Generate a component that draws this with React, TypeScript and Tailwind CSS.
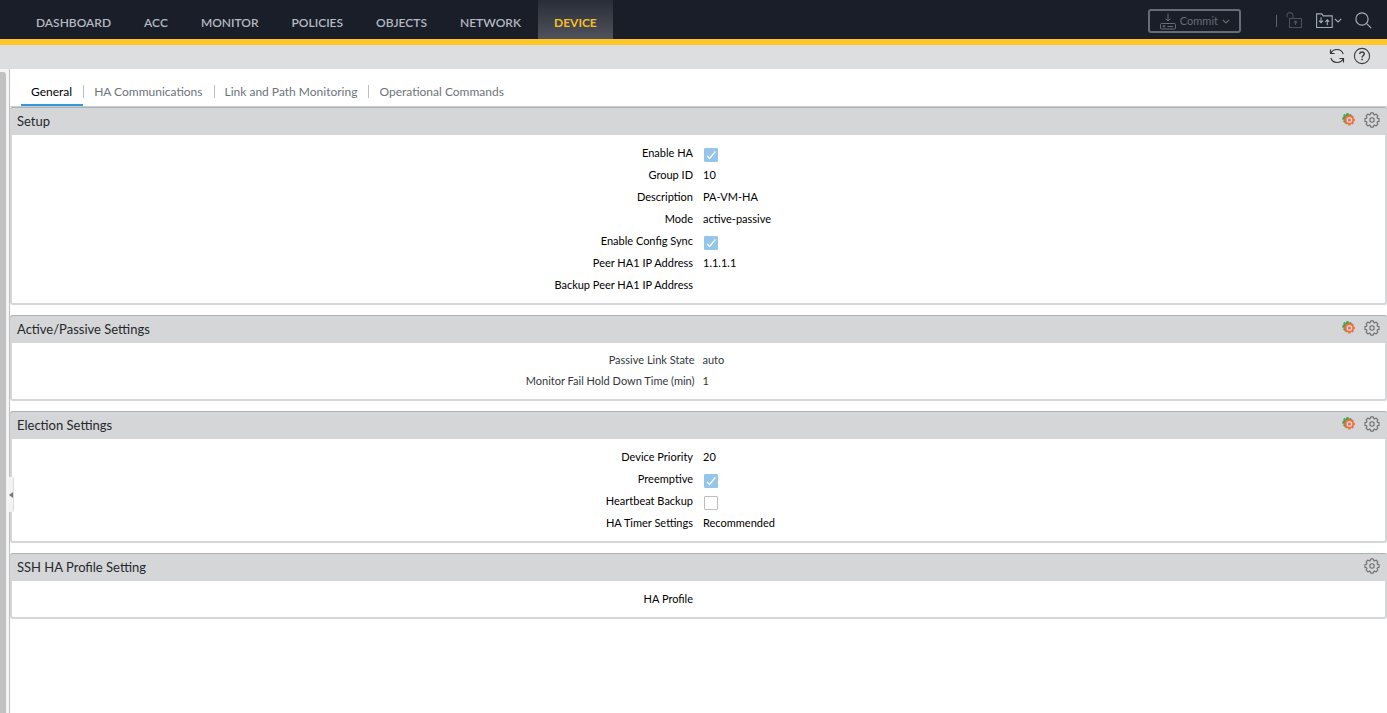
import React, { useId, useState } from 'react';

const NAV = ['DASHBOARD', 'ACC', 'MONITOR', 'POLICIES', 'OBJECTS', 'NETWORK', 'DEVICE'];
const TABS = ['General', 'HA Communications', 'Link and Path Monitoring', 'Operational Commands'];

type Field = { label: string; value: string | boolean };

const SETUP: Field[] = [
  { label: 'Enable HA', value: true },
  { label: 'Group ID', value: '10' },
  { label: 'Description', value: 'PA-VM-HA' },
  { label: 'Mode', value: 'active-passive' },
  { label: 'Enable Config Sync', value: true },
  { label: 'Peer HA1 IP Address', value: '1.1.1.1' },
  { label: 'Backup Peer HA1 IP Address', value: '' },
];
const ACTIVE_PASSIVE: Field[] = [
  { label: 'Passive Link State', value: 'auto' },
  { label: 'Monitor Fail Hold Down Time (min)', value: '1' },
];
const ELECTION: Field[] = [
  { label: 'Device Priority', value: '20' },
  { label: 'Preemptive', value: true },
  { label: 'Heartbeat Backup', value: false },
  { label: 'HA Timer Settings', value: 'Recommended' },
];
const SSH: Field[] = [{ label: 'HA Profile', value: '' }];

function gearPath(cx: number, cy: number, outer: number, inner: number) {
  const points: string[] = [];
  for (let i = 0; i < 8; i++) {
    const a = (i * Math.PI) / 4 - Math.PI / 2;
    [
      [-0.34, inner],
      [-0.17, outer],
      [0.17, outer],
      [0.34, inner],
    ].forEach(([d, r]) => {
      points.push(`${(cx + r * Math.cos(a + d)).toFixed(2)} ${(cy + r * Math.sin(a + d)).toFixed(2)}`);
    });
  }
  return `M${points.join('L')}Z`;
}

function GearIcon() {
  return (
    <svg width="16" height="16" viewBox="0 0 16 16" fill="none" stroke="#6b6e71" strokeWidth="1.1" strokeLinejoin="round">
      <path d={gearPath(8, 8, 7.2, 5.6)} />
      <circle cx="8" cy="8" r="2.2" />
    </svg>
  );
}

function TemplateIcon() {
  return (
    <svg width="13" height="13" viewBox="0 0 13 13">
      <path d={gearPath(5.5, 5.4, 5.4, 4.1)} fill="#3fa64b" />
      <path d={gearPath(7.4, 7, 5.6, 4.2)} fill="#f2683c" />
      <circle cx="7.4" cy="7" r="3" fill="#e2d3cd" />
      <circle cx="7.4" cy="7" r="1.5" fill="#f2683c" />
    </svg>
  );
}

function CommitIcon() {
  return (
    <svg width="16" height="17" viewBox="0 0 16 17" fill="none" stroke="currentColor">
      <path d="M8 0.5V8M5.5 5.6L8 8.1L10.5 5.6" />
      <path d="M1.5 10.5H14.5a1 1 0 0 1 1 1v3.5a1 1 0 0 1-1 1H1.5a1 1 0 0 1-1-1v-3.5a1 1 0 0 1 1-1Z" />
      <path d="M7.5 13.5H13" />
      <circle cx="4" cy="13.3" r="0.9" />
    </svg>
  );
}

function Chevron() {
  return (
    <svg width="8" height="5" viewBox="0 0 8 5" fill="none" stroke="currentColor" strokeWidth="1.2">
      <path d="M0.8 0.8L4 4L7.2 0.8" />
    </svg>
  );
}

function LockIcon() {
  return (
    <svg width="17" height="17" viewBox="0 0 17 17" fill="none" stroke="currentColor" strokeWidth="1.1">
      <path d="M1 5.5V3.6a3 3 0 0 1 6 0V6" />
      <path d="M3.5 6.5H15.5V15.5H3.5Z" />
      <circle cx="9.5" cy="10" r="1" fill="currentColor" />
      <path d="M9.5 10V13" />
    </svg>
  );
}

function ConfigIcon() {
  return (
    <svg width="17" height="16" viewBox="0 0 17 16" fill="none" stroke="currentColor" strokeWidth="1.1">
      <path d="M0.6 14.5V0.9H5.8L7.2 2.9H16.2V14.5Z" />
      <path d="M5 4.2V9.8M3 7.6L5 9.7L7 7.6" />
      <path d="M11.3 12.2V6.8M9.3 8.8L11.3 6.8L13.3 8.8" />
    </svg>
  );
}

function SearchIcon() {
  return (
    <svg width="17" height="17" viewBox="0 0 17 17" fill="none" stroke="currentColor" strokeWidth="1.2">
      <circle cx="7" cy="7" r="6.1" />
      <path d="M11.4 11.4L16.2 16.2" />
    </svg>
  );
}

function RefreshIcon() {
  return (
    <svg width="16" height="16" viewBox="0 0 16 16" fill="none" stroke="#2e3338" strokeWidth="1.1">
      <path d="M1.5 1.5V5.5H5.5" />
      <path d="M1.8 5.3C3 2.7 5.2 1.5 8 1.5c2.7 0 5.2 1.6 6.2 4.5" />
      <path d="M14.5 14.5V10.5H10.5" />
      <path d="M14.2 10.7C13 13.3 10.8 14.5 8 14.5c-2.7 0-5.2-1.6-6.2-4.5" />
    </svg>
  );
}

function HelpIcon() {
  return (
    <svg width="18" height="18" viewBox="0 0 18 18" fill="none" stroke="#3a3f44">
      <circle cx="9" cy="9" r="7.6" strokeWidth="1.1" />
      <path d="M6.8 7.1C6.8 5.7 7.7 4.9 9 4.9s2.2 0.8 2.2 2c0 1.6-2.1 1.7-2.1 3.6" strokeWidth="1.5" />
      <path d="M9.1 11.7V13.2" strokeWidth="1.6" />
    </svg>
  );
}

function FieldRow({ field, compact }: { field: Field; compact?: boolean }) {
  const id = useId();
  const isCheck = typeof field.value === 'boolean';
  return (
    <div
      className={
        compact
          ? 'grid h-[21px] grid-cols-2 items-center gap-x-2 text-[#33373b]'
          : 'grid h-[22px] grid-cols-2 items-center gap-x-[10px] pr-px text-black'
      }
    >
      {isCheck ? (
        <label htmlFor={id} className="text-right">
          {field.label}
        </label>
      ) : (
        <span className="text-right">{field.label}</span>
      )}
      {isCheck ? (
        <span className="flex items-center pt-1 pl-px">
          <span className="relative flex">
            <input
              id={id}
              type="checkbox"
              disabled
              defaultChecked={field.value as boolean}
              className="size-[14px] appearance-none rounded-[1px] border border-[#bdbdbd] bg-white checked:border-[#94c5eb] checked:bg-[#94c5eb]"
            />
            {field.value && (
              <svg
                className="pointer-events-none absolute inset-0"
                width="14"
                height="14"
                viewBox="0 0 14 14"
                fill="none"
                stroke="white"
                strokeWidth="1.2"
              >
                <path d="M3 7.8L5.6 10.5L11.3 3.5" />
              </svg>
            )}
          </span>
        </span>
      ) : (
        <span>{field.value}</span>
      )}
    </div>
  );
}

function Panel({
  title,
  fields,
  template = true,
  compact,
}: {
  title: string;
  fields: Field[];
  template?: boolean;
  compact?: boolean;
}) {
  return (
    <section className="rounded-[3px] border-x-2 border-b-2 border-[#d5d6d8] bg-white">
      <header className="-mx-0.5 flex h-7 items-center justify-between rounded-t-[3px] border-t border-[#a5b5ba] bg-[#d5d6d8] px-[7px] pb-0.5">
        <h2 className="text-[13px] leading-5 text-[#26292c]">{title}</h2>
        <div className="flex items-center gap-[9px] pb-0.5">
          {template && (
            <button type="button" aria-label={`${title} template`}>
              <TemplateIcon />
            </button>
          )}
          <button type="button" aria-label={`Edit ${title}`}>
            <GearIcon />
          </button>
        </div>
      </header>
      <div className={compact ? 'pt-[6px] pb-2 text-[11px] leading-4' : 'py-[7px] text-[11px] leading-4'}>
        {fields.map((f) => (
          <FieldRow key={f.label} field={f} compact={compact} />
        ))}
      </div>
    </section>
  );
}

export default function App() {
  const [tab, setTab] = useState('General');
  return (
    <div className="flex min-h-screen flex-col bg-white font-['Lato',sans-serif]">
      <header className="flex h-[45px] items-stretch justify-between border-b-[6px] border-[#fdc629] bg-[#1a1e29]">
        <nav className="flex gap-px pl-5">
          {NAV.map((n) => (
            <a
              key={n}
              href="#"
              className={
                n === 'DEVICE'
                  ? 'flex items-center bg-linear-to-b from-[#292d37] to-[#50535b] px-4 pt-[6px] text-[12px] font-bold text-[#f5bf2a]'
                  : 'flex items-center px-4 pt-[6px] text-[12px] font-semibold text-[#b4b9c2]'
              }
            >
              {n}
            </a>
          ))}
        </nav>
        <div className="flex items-center pr-[15px] pt-[2px] text-[#a3adb8]">
          <button
            type="button"
            disabled
            className="flex h-6 items-center gap-1 rounded-[3px] border-2 border-[#686c75] pt-0.5 pr-[9px] pl-[10px] text-[11px] text-[#686c75]"
          >
            <CommitIcon />
            <span>Commit</span>
            <Chevron />
          </button>
          <span className="ml-[35px] h-3 w-px bg-[#5c626c]" />
          <button type="button" aria-label="Locks" className="ml-[9px] text-[#4b515c]">
            <LockIcon />
          </button>
          <button type="button" aria-label="Configuration" className="ml-[13px] flex items-center gap-px">
            <ConfigIcon />
            <Chevron />
          </button>
          <button type="button" aria-label="Search" className="ml-[13px]">
            <SearchIcon />
          </button>
        </div>
      </header>
      <div className="flex h-6 items-center justify-end gap-2 bg-[#dddee0] pr-4 pb-0.5">
        <button type="button" aria-label="Refresh">
          <RefreshIcon />
        </button>
        <button type="button" aria-label="Help">
          <HelpIcon />
        </button>
      </div>
      <div className="flex grow">
        <div className="flex w-[9px] shrink-0 bg-[#f5f5f5] pt-[3px]">
          <div className="w-[6px] rounded-tr-[3px] bg-[#c1c1c1]" />
        </div>
        <main className="relative min-w-0 grow border-l border-[#bfbfbf]">
          <div className="flex h-[38px] items-end border-b border-[#c9cbcd] pl-[11px]">
            {TABS.map((t, i) => (
              <div key={t} className="flex items-end">
                {i > 0 && <span className="mb-2 h-[13px] w-px bg-[#b9bfc4]" />}
                <button
                  type="button"
                  onClick={() => setTab(t)}
                  className={
                    t === tab
                      ? 'border-b-2 border-[#3698db] pr-[11px] pb-1 pl-[10px] text-[12px] leading-4 text-black'
                      : 'border-b-2 border-transparent pr-[11px] pb-1 pl-[10px] text-[12px] leading-4 text-[#6c747b]'
                  }
                >
                  {t}
                </button>
              </div>
            ))}
          </div>
          <div className="flex flex-col gap-[10px]">
            <Panel title="Setup" fields={SETUP} />
            <Panel title="Active/Passive Settings" fields={ACTIVE_PASSIVE} compact />
            <Panel title="Election Settings" fields={ELECTION} />
            <Panel title="SSH HA Profile Setting" fields={SSH} template={false} />
          </div>
          <button
            type="button"
            aria-label="Collapse side panel"
            className="absolute top-[408px] -left-px flex h-[35px] w-[5px] items-center rounded-r-[2px] border-r border-[#dcdcdc] bg-[#f2f2f2]"
          >
            <svg width="4" height="6" viewBox="0 0 4 6">
              <path d="M4 0V6L0 3Z" fill="#777" />
            </svg>
          </button>
        </main>
      </div>
    </div>
  );
}
